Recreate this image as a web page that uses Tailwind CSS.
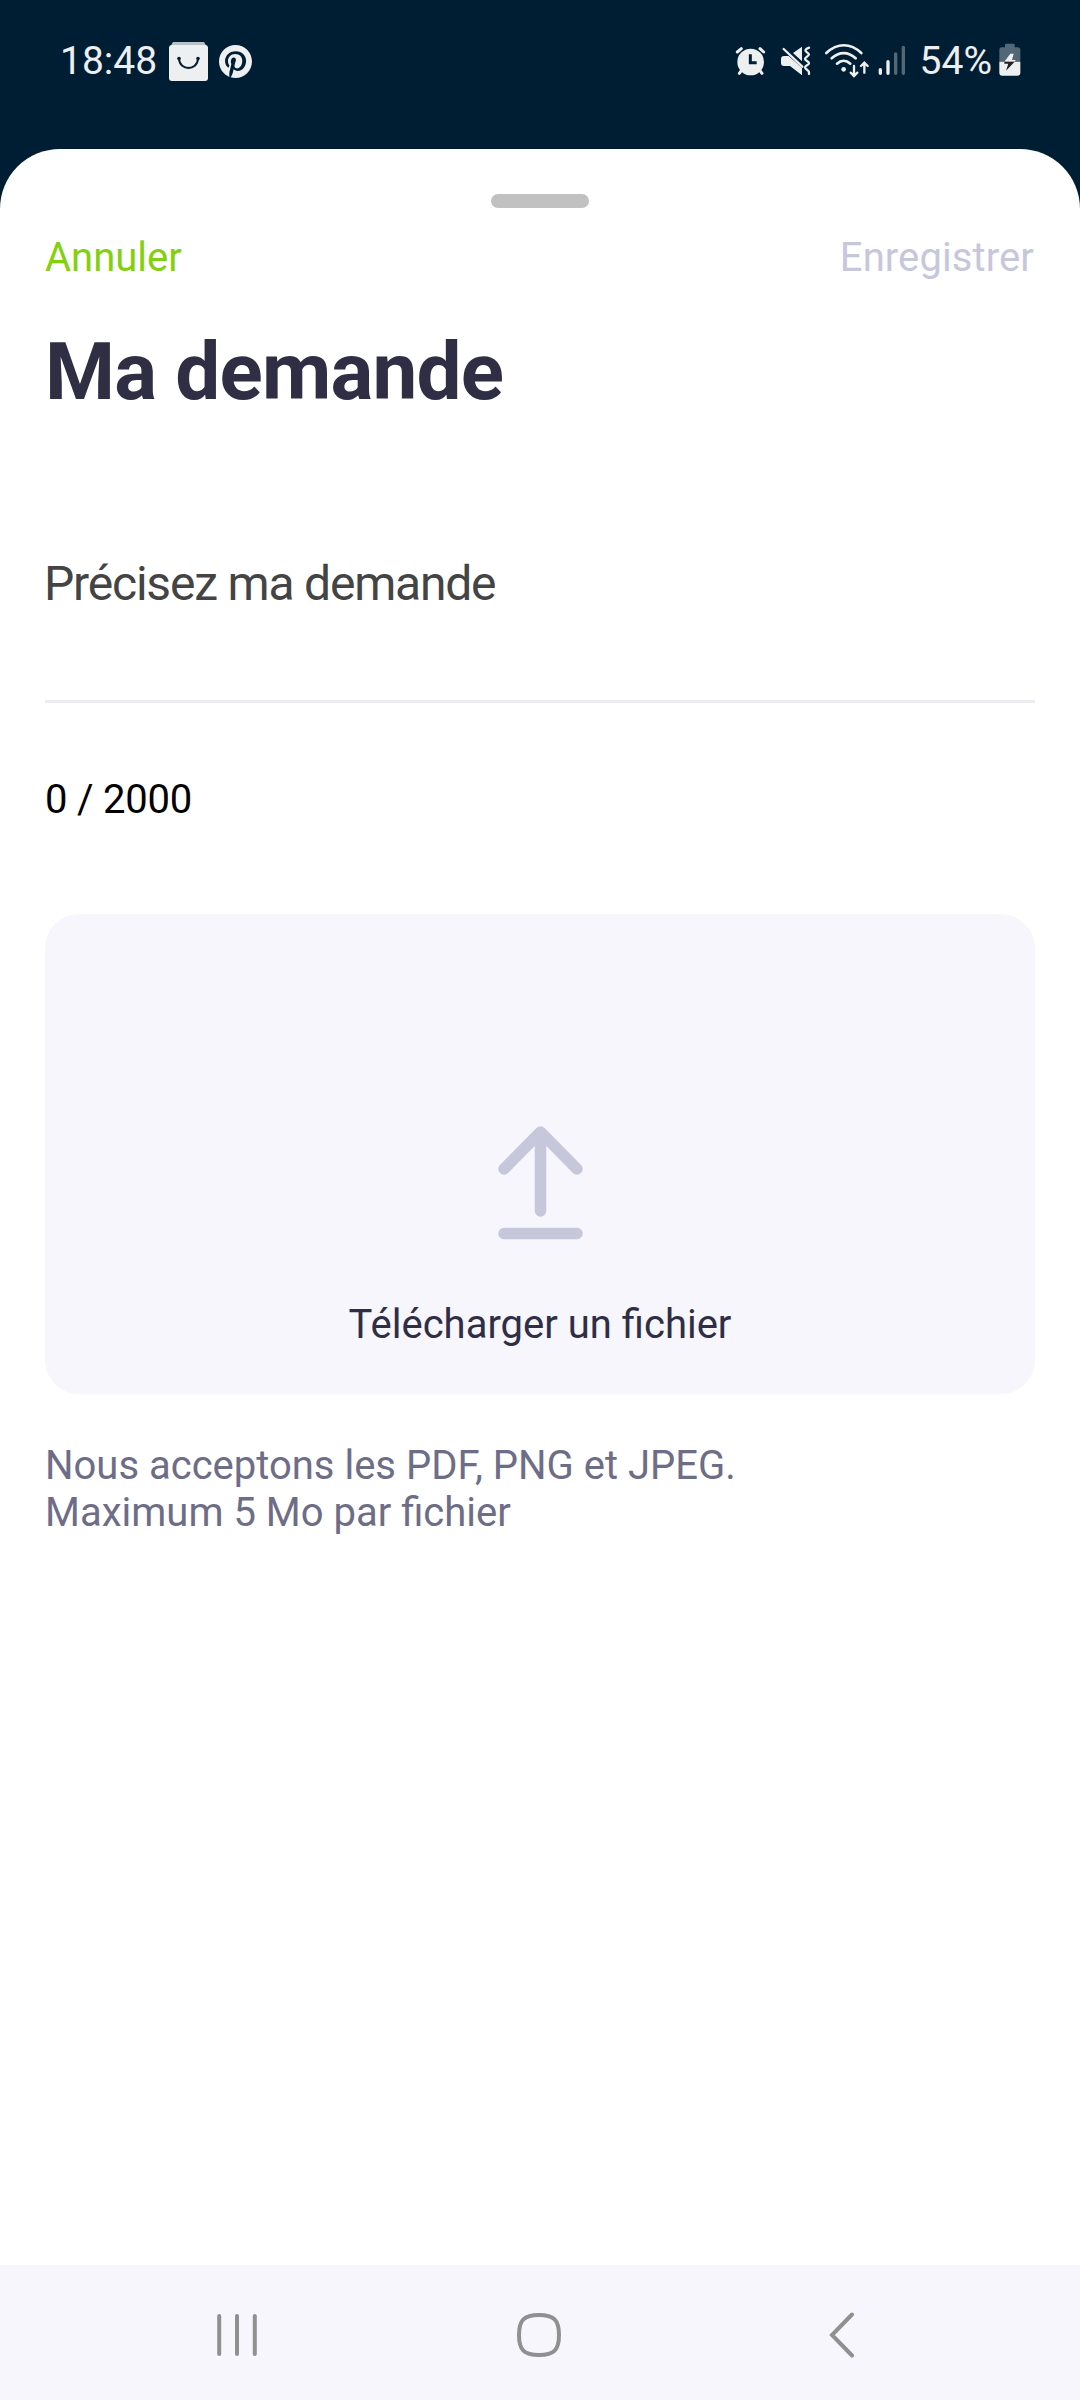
<!DOCTYPE html>
<html lang="fr">
<head>
<meta charset="utf-8">
<title>Ma demande</title>
<script src="https://cdn.jsdelivr.net/npm/@tailwindcss/browser@4"></script>
</head>
<body class="bg-[#001e33] font-[Roboto,sans-serif]">
<div class="flex h-[2400px] w-[1080px] flex-col overflow-hidden">
  <header class="flex h-[149px] shrink-0 items-start justify-between pl-[60px] pr-[59px] pt-[37px] text-[#edeff1]">
    <div class="flex h-12 items-center">
      <span class="whitespace-nowrap text-[39px] leading-[47px]">18:48</span>
      <svg class="ml-3 size-[39px]" viewBox="0 0 39 39" fill="none"><path d="M4 0h31l3 5H1z" fill="#b9c1c7"/><rect y="3" width="39" height="36" rx="3" fill="#edeff1"/><path d="M10 17c1 12 18 12 19 0" stroke="#001e33" stroke-width="2"/><circle cx="10" cy="16.500" r="1.800" fill="#001e33"/><circle cx="29" cy="16.500" r="1.800" fill="#001e33"/></svg>
      <svg class="ml-[11px] size-[33px]" viewBox="0 0 24 24" fill="currentColor"><path d="M12 0C5.400 0 0 5.400 0 12c0 5.100 3.200 9.400 7.600 11.200-.1-.9-.2-2.400 0-3.400.2-.9 1.400-6 1.400-6s-.4-.7-.4-1.800c0-1.700 1-2.900 2.200-2.900 1 0 1.500.8 1.500 1.700 0 1-.7 2.600-1 4-.3 1.200.6 2.200 1.800 2.200 2.100 0 3.800-2.200 3.800-5.500 0-2.900-2.100-4.900-5-4.900-3.400 0-5.400 2.600-5.400 5.200 0 1 .4 2.100.9 2.700.1.100.1.200.1.300l-.3 1.400c-.1.200-.2.300-.4.200-1.500-.7-2.400-2.900-2.400-4.600 0-3.800 2.800-7.300 7.900-7.300 4.200 0 7.400 3 7.400 6.900 0 4.100-2.600 7.500-6.200 7.500-1.200 0-2.400-.6-2.800-1.400l-.7 2.900c-.3 1-1 2.300-1.500 3.100 1.100.3 2.300.5 3.500.5 6.600 0 12-5.400 12-12S18.600 0 12 0z"/></svg>
    </div>
    <div class="flex h-12 items-center">
      <svg class="h-8 w-[31px]" viewBox="45 75 93 96" fill="none" stroke="currentColor" stroke-linecap="round"><circle cx="92" cy="126" r="40" fill="currentColor" stroke="none"/><path d="M52 96l12-10M120 86l11 10M64 152l-6 8M120 152l6 8" stroke-width="9"/><path d="M91 103v25h19" stroke="#001e33" stroke-width="9" stroke-linecap="butt"/></svg>
      <svg class="ml-[14px] h-8 w-8" viewBox="180 75 96 96" fill="currentColor"><path d="M183 117q0-9 9-9h14l40 36v22l-36-28h-18q-9 0-9-9zM219 99l27-19v44z"/><path d="M191 87l56 53" stroke="currentColor" stroke-width="7" stroke-linecap="round"/><path d="M267 83c-13 6-13 9-6 14s8 7 0 13-8 8 0 13 8 8 0 13-8 8 0 13 6 8 6 13" fill="none" stroke="currentColor" stroke-width="7" stroke-linecap="round"/></svg>
      <svg class="ml-3 h-[36px] w-[46px]" viewBox="312 69 138 108" fill="none" stroke="currentColor" stroke-width="8" stroke-linecap="round"><path d="M319 99c33-31 72-31 105 0M335 115c22-21 50-21 72 0M351 131c12-11 28-11 40 0"/><circle cx="371" cy="148" r="7" fill="currentColor" stroke="none"/><path d="M402 138v29M392 158l10 10 10-10M433 158v-28M423 138l10-10 10 10" stroke-width="7"/></svg>
      <svg class="ml-2 h-8 w-[28px]" viewBox="476 75 84 96" stroke="currentColor" stroke-width="10" stroke-linecap="round"><path d="M483 149v11M506 125v35"/><path d="M529 102v58M552 82v78" stroke="#536877"/></svg>
      <span class="ml-[14px] whitespace-nowrap text-[39px] leading-[47px]">54%</span>
      <svg class="-mt-[3px] ml-[7px] h-[33px] w-[22px]" viewBox="836 70 66 99"><path d="M854 79v-3q0-4 4-4h21q4 0 4 4v7h9q8 0 8 8v35h-63V91q0-8 8-8h9z" fill="#536877"/><path d="M837 126h63v33q0 9-9 9h-45q-9 0-9-9z" fill="#edeff1"/><path d="M870 102h10l-5 19h11l-3 5h-31z" fill="#edeff1"/><path d="M852 126h31l-26 27 7-21h-12z" fill="#222"/></svg>
    </div>
  </header>

  <main class="flex grow flex-col rounded-t-[60px] bg-white px-[45px] pt-[45px]">
    <div class="h-[14px] w-[98px] self-center rounded-full bg-[#c1c1c1]"></div>
    <div class="mt-[26px] flex justify-between text-[40px] leading-[47px]">
      <button class="text-[#83d00f]">Annuler</button>
      <button class="mr-px tracking-[0.1px] text-[#c7c7dc]">Enregistrer</button>
    </div>
    <h1 class="mt-11 text-[80px] leading-[94px] font-bold tracking-[-0.8px] text-[#2f2e44]">Ma demande</h1>
    <div class="mt-[137px] h-[147px] border-b-3 border-[#ebebf0] text-[48px] leading-[56px] tracking-[-1.2px] text-[#444444]"><span class="-ml-px">Précisez ma demande</span></div>
    <p class="mt-[73px] text-[40px] leading-[47px] tracking-[-0.2px] text-black">0 / 2000</p>
    <section class="mt-[91px] flex h-[480px] flex-col items-center justify-end rounded-[34px] bg-[#f6f6fc] pb-[46px]">
      <svg class="h-[114px] w-[86px]" viewBox="0 0 86 114" fill="none" stroke="#c7c7dc" stroke-width="11.500" stroke-linecap="round" stroke-linejoin="round"><path d="M43.500 85V6M7 43L43.500 6l36.500 37M7 107.500h73"/></svg>
      <p class="mt-[61px] text-[40px] leading-[47px] text-[#2f2e44]">Télécharger un fichier</p>
    </section>
    <p class="mt-12 text-[40px] leading-[47px] text-[#6e6d87]">Nous acceptons les PDF, PNG et JPEG.<br>Maximum 5 Mo par fichier</p>
  </main>

  <nav class="flex h-[135px] shrink-0 items-center bg-[#f6f6fc] pl-[215px] pt-[4px] text-[#909090]">
    <svg class="h-[46px] w-[44px]" viewBox="0 0 44 46" stroke="currentColor" stroke-width="4" stroke-linecap="round"><path d="M4.200 4v38M22 4v38M39.800 4v38"/></svg>
    <svg class="ml-[257px] size-[46px]" viewBox="0 0 46 46" fill="none" stroke="currentColor" stroke-width="4"><path d="M23 3C38 3 43 8 43 23S38 43 23 43 3 38 3 23 8 3 23 3z"/></svg>
    <svg class="ml-[266px] h-[46px] w-[28px]" viewBox="0 0 28 46" fill="none" stroke="currentColor" stroke-width="4" stroke-linecap="round"><path d="M24 2.500L4 23l20 20.500"/></svg>
  </nav>
</div>
</body>
</html>
